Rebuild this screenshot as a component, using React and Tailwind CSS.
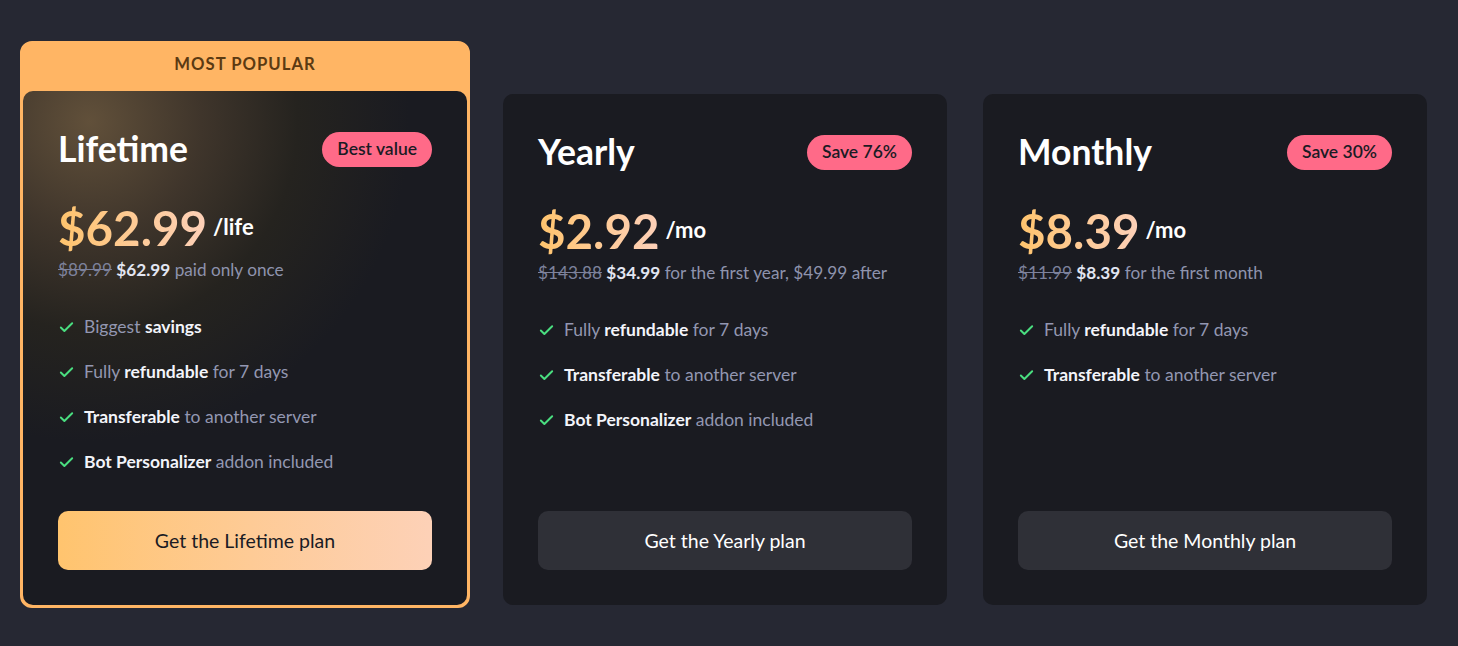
import React from 'react';
import { Check } from 'lucide-react';

const plans = [
  {
    id: 'lifetime',
    name: 'Lifetime',
    badge: 'Best value',
    price: '$62.99',
    unit: '/life',
    was: '$89.99',
    now: '$62.99',
    note: 'paid only once',
    features: [
      ['Biggest ', 'savings', ''],
      ['Fully ', 'refundable', ' for 7 days'],
      ['', 'Transferable', ' to another server'],
      ['', 'Bot Personalizer', ' addon included']
    ],
    cta: 'Get the Lifetime plan',
    popular: true
  },
  {
    id: 'yearly',
    name: 'Yearly',
    badge: 'Save 76%',
    price: '$2.92',
    unit: '/mo',
    was: '$143.88',
    now: '$34.99',
    note: 'for the first year, $49.99 after',
    features: [
      ['Fully ', 'refundable', ' for 7 days'],
      ['', 'Transferable', ' to another server'],
      ['', 'Bot Personalizer', ' addon included']
    ],
    cta: 'Get the Yearly plan'
  },
  {
    id: 'monthly',
    name: 'Monthly',
    badge: 'Save 30%',
    price: '$8.39',
    unit: '/mo',
    was: '$11.99',
    now: '$8.39',
    note: 'for the first month',
    features: [
      ['Fully ', 'refundable', ' for 7 days'],
      ['', 'Transferable', ' to another server']
    ],
    cta: 'Get the Monthly plan'
  }
];

function Feature({ parts }) {
  const [pre, bold, post] = parts;
  return (
    <li className="flex items-center gap-[9px] h-6 text-[17.5px] text-[#9397b1]">
      <Check className="w-[17px] h-[17px] text-[#4ade80] shrink-0" strokeWidth={2.75} />
      <span>
        {pre}
        <span className="font-bold text-[#f3f4fa]">{bold}</span>
        {post}
      </span>
    </li>
  );
}

function PlanCard({ plan }) {
  return (
    <div
      className={`relative flex flex-col h-full rounded-[10px] px-[35px] pt-[38px] pb-[35px] ${
        plan.popular
          ? 'bg-[radial-gradient(circle_320px_at_15%_6%,#61503a_0%,#3f352b_35%,#25231f_65%,#1a1b21_100%)]'
          : 'bg-[#1a1b21]'
      }`}
    >
      {/* Title + badge */}
      <div className="flex items-center justify-between h-10">
        <h2 className="text-[35.5px] font-bold text-white leading-none">{plan.name}</h2>
        <span className="h-[35px] px-[15px] flex items-center rounded-full bg-[#ff6a88] text-[#1a1b24] text-[17.5px] font-semibold">
          {plan.badge}
        </span>
      </div>

      {/* Price */}
      <div className="mt-9 flex items-center gap-[6px] h-[46px]">
        <span className="text-[47.5px] font-bold leading-none bg-gradient-to-r from-[#ffc46c] to-[#fdd0b8] bg-clip-text text-transparent">
          {plan.price}
        </span>
        <span className="text-[22px] font-bold text-white leading-none -mt-[2px]">{plan.unit}</span>
      </div>
      <p className="mt-[7px] h-6 text-[17.2px] leading-6 text-[#8e93ad] whitespace-nowrap">
        <span className="line-through text-[#7d829c]">{plan.was}</span>{' '}
        <span className="font-bold text-[#e3e6f2]">{plan.now}</span> {plan.note}
      </p>

      {/* Features */}
      <ul className="mt-[33px] flex flex-col gap-[21px]">
        {plan.features.map((f, i) => (
          <Feature key={i} parts={f} />
        ))}
      </ul>

      {/* CTA */}
      <button
        className={`mt-auto h-[59px] w-full rounded-[10px] text-[19.5px] ${
          plan.popular
            ? 'bg-gradient-to-r from-[#ffc46e] to-[#fdd1b7] text-[#1a1b24]'
            : 'bg-[#2f3037] text-white'
        }`}
      >
        {plan.cta}
      </button>
    </div>
  );
}

export default function App() {
  const [lifetime, yearly, monthly] = plans;
  return (
    <div className="min-h-screen w-full bg-[#262833] font-['Lato','Noto_Sans',sans-serif]">
      <div className="flex items-end pl-5 pt-[41px] pb-[38px]">
        {/* Most popular wrapper */}
        <div className="w-[450px] rounded-[12px] border-[3px] border-[#ffb564] bg-[#ffb564] flex flex-col">
          <div className="h-[47px] pb-[6px] flex items-center justify-center text-[16.7px] font-bold tracking-[1px] text-[#5b3a12] uppercase">
            Most popular
          </div>
          <div className="h-[514px]">
            <PlanCard plan={lifetime} />
          </div>
        </div>

        <div className="ml-[33px] mb-[3px] w-[444px] h-[511px]">
          <PlanCard plan={yearly} />
        </div>
        <div className="ml-9 mb-[3px] w-[444px] h-[511px]">
          <PlanCard plan={monthly} />
        </div>
      </div>
    </div>
  );
}
